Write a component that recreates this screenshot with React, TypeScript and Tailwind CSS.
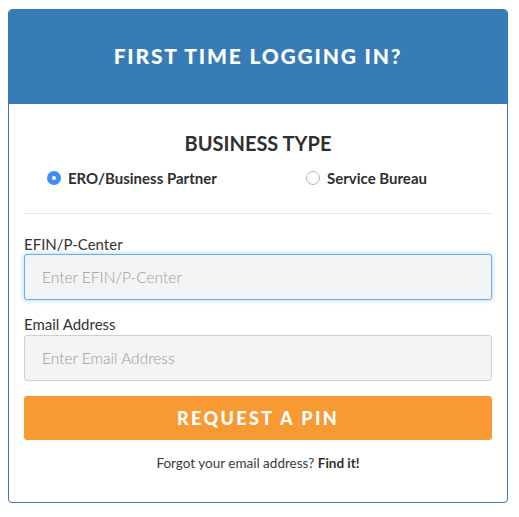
import * as React from 'react';

const FirstLogin: React.FC = () => {
  const [type, setType] = React.useState<'ero' | 'bureau'>('ero');

  const Radio = ({checked}: {checked: boolean}) => (
    checked ? (
      <span className="w-[14px] h-[14px] rounded-full bg-[#3d8ff0] flex items-center justify-center shrink-0">
        <span className="w-[4px] h-[4px] rounded-full bg-white"/>
      </span>
    ) : (
      <span className="w-[14px] h-[14px] rounded-full border border-[#b5b5b5] bg-white shrink-0"/>
    )
  );

  return (
    <div className="pt-[9px] px-2 font-['Lato','Liberation_Sans',sans-serif] text-[#333]">
      <div className="w-[500px] border border-[#3778b5] rounded-[4px] overflow-hidden">
        <div className="bg-[#377cb7] h-[94px] flex items-center justify-center pb-[3px]">
          <h1 className="text-white text-[21px] font-black tracking-[1.8px] leading-6">
            FIRST TIME LOGGING IN?
          </h1>
        </div>

        <div className="px-[15px] pt-[27px] pb-[29px]">
          <h2 className="text-center text-[20px] font-bold leading-6 text-[#2f2f2f]">BUSINESS TYPE</h2>

          <div className="grid grid-cols-2 mt-[13px] text-[15px] font-bold leading-5 text-[#2f2f2f]">
            <label className="flex items-center gap-[7px] pl-[23px] cursor-pointer" onClick={() => setType('ero')}>
              <Radio checked={type === 'ero'}/>
              ERO/Business Partner
            </label>
            <label className="flex items-center gap-[7px] pl-[48px] cursor-pointer" onClick={() => setType('bureau')}>
              <Radio checked={type === 'bureau'}/>
              Service Bureau
            </label>
          </div>

          <div className="mt-[25px] border-t border-[#e8e8e8]"/>

          <label className="block mt-[20px] text-[15px] leading-5">EFIN/P-Center</label>
          <input
            placeholder="Enter EFIN/P-Center"
            className="block w-full h-[46px] px-[17px] bg-[#f4f4f4] border border-[#66afe9] rounded-[3px] shadow-[0_0_5px_rgba(102,175,233,0.6)] text-[15.5px] font-light placeholder:text-[#9a9a9a] outline-none"
          />

          <label className="block mt-[14px] text-[15px] leading-[21px]">Email Address</label>
          <input
            placeholder="Enter Email Address"
            className="block w-full h-[46px] px-[17px] bg-[#f4f4f4] border border-[#cfcfcf] rounded-[3px] text-[15.5px] font-light placeholder:text-[#9a9a9a] outline-none"
          />

          <button className="mt-[15px] w-full h-[44px] bg-[#f79a33] rounded-[3px] text-white text-[18px] font-black tracking-[2.4px] leading-6">
            REQUEST A PIN
          </button>

          <p className="mt-[13px] text-center text-[13.5px] leading-5 text-[#3a3a3a]">
            Forgot your email address? <a className="font-bold text-[#2f2f2f] cursor-pointer">Find it!</a>
          </p>
        </div>
      </div>
    </div>
  )
};

export default function App() {
  return <FirstLogin/>;
}
